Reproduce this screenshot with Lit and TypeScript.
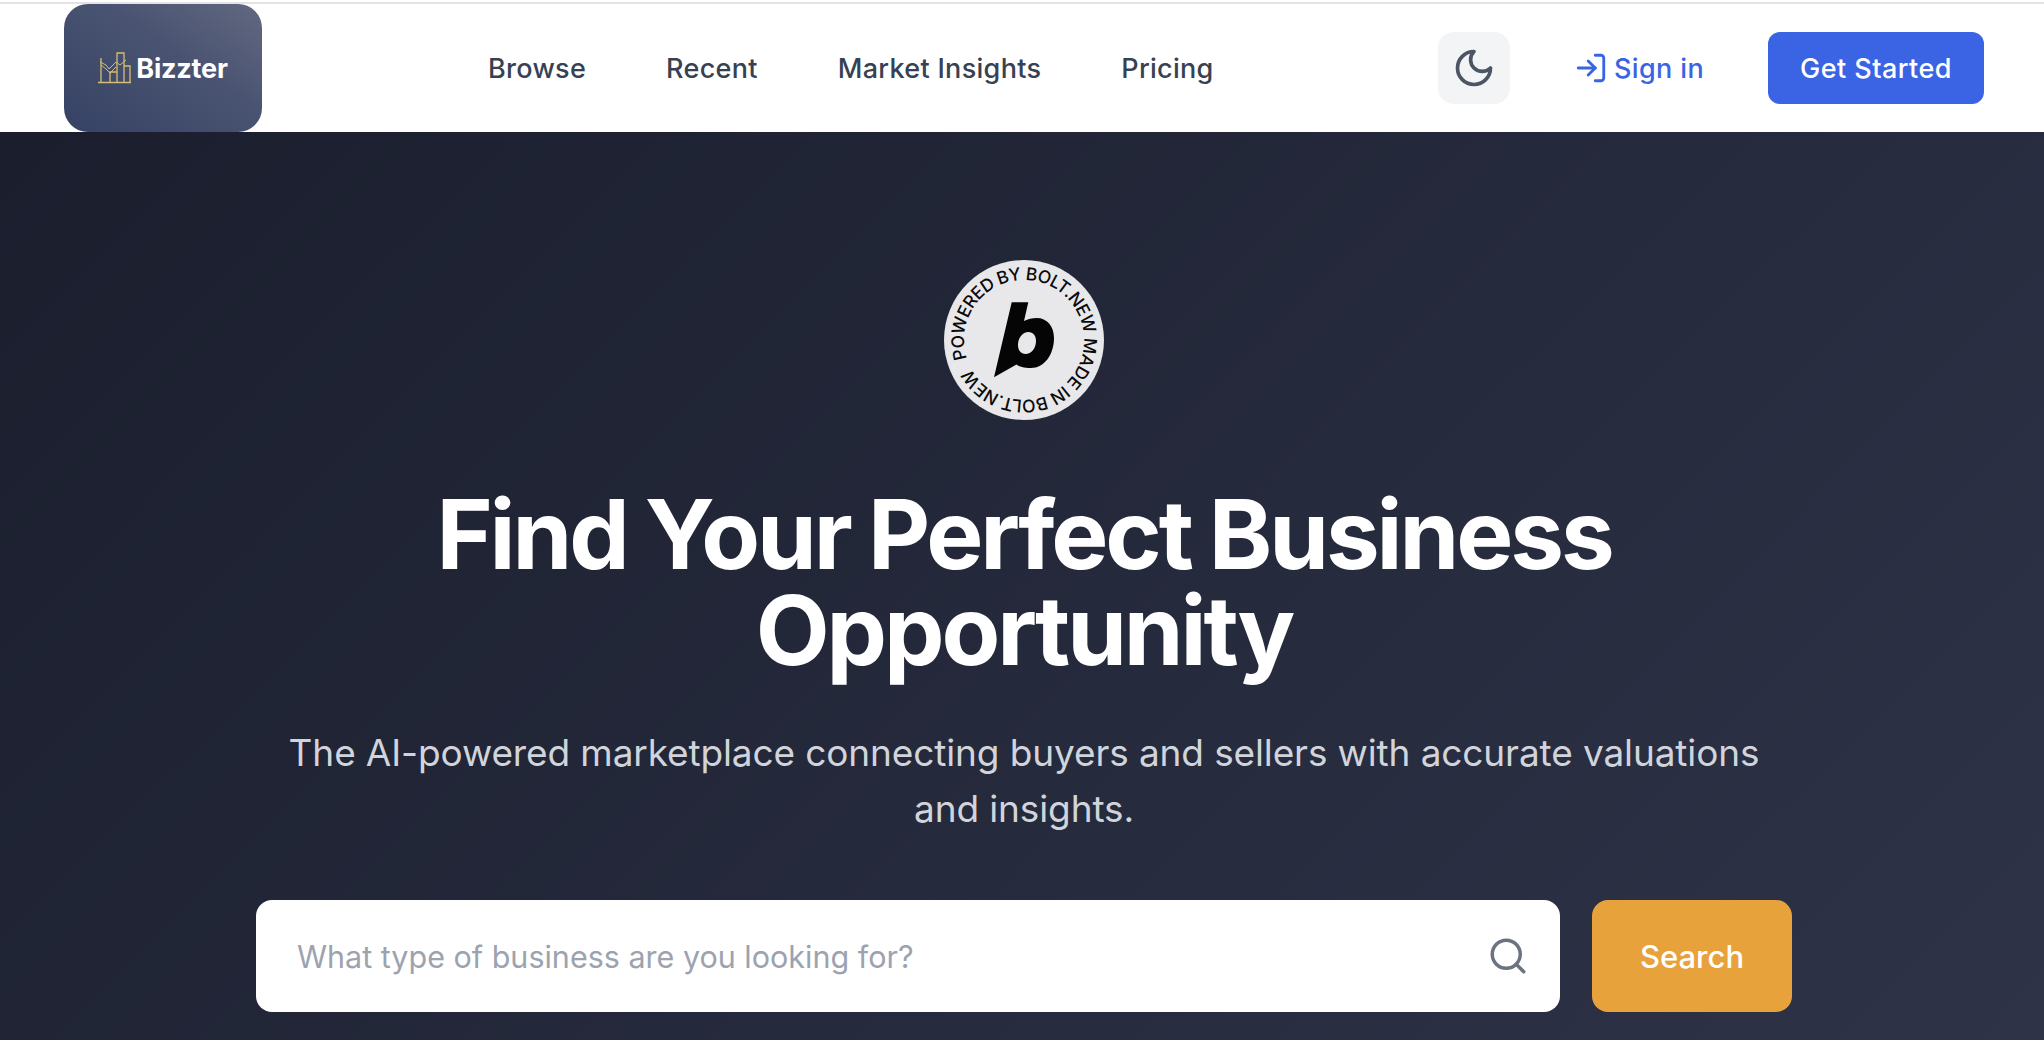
import { LitElement, html, css, svg } from "lit";
import { customElement } from "lit/decorators.js";

@customElement("app-root")
export class AppRoot extends LitElement {
  static styles = css`
    :host { display: block; height: 1040px; overflow: hidden; background: #fff; font-family: Inter, "Liberation Sans", sans-serif; }
    * { box-sizing: border-box; }
    .topline { height: 4px; border-top: 2px solid #fff; background: #e3e3e3; }
    header { height: 128px; display: flex; align-items: stretch; padding: 0 60px 0 64px; background: #fff; }
    .logo { width: 198px; display: flex; align-items: center; justify-content: center; gap: 4px; border-radius: 24px; background: linear-gradient(35deg, #364264 0%, #4a5472 60%, #626880 100%); }
    .logo svg { width: 34px; height: 34px; display: block; }
    .logo span { font-size: 27px; font-weight: 700; color: #fff; letter-spacing: -0.2px; }
    nav { display: flex; align-items: center; gap: 80px; margin-left: 226px; }
    nav a { font-size: 27px; font-weight: 500; color: #374151; letter-spacing: 0.3px; }
    .right { display: flex; align-items: center; gap: 64px; margin-left: auto; }
    .moon { width: 72px; height: 72px; border-radius: 16px; background: #f3f4f6; display: flex; align-items: center; justify-content: center; }
    .moon svg { width: 44px; height: 44px; color: #4b5563; }
    .signin { display: flex; align-items: center; gap: 6px; font-size: 27px; font-weight: 500; color: #3b64e4; letter-spacing: 0.35px; }
    .signin svg { width: 34px; height: 34px; }
    .start { width: 216px; height: 72px; border-radius: 12px; background: #3b64e4; color: #fff; font-size: 27px; font-weight: 500; letter-spacing: 0.45px; display: flex; align-items: center; justify-content: center; }
    .hero { height: 908px; background: linear-gradient(135deg, #1a1e2d 0%, #2e3348 100%); display: flex; flex-direction: column; align-items: center; padding: 128px 0 0 4px; }
    .badge { width: 160px; height: 160px; display: block; }
    .badge text { font-family: Inter, "Liberation Sans", sans-serif; font-size: 17.5px; font-weight: 500; fill: #0a0a0a; }
    h1 { margin: 66px 0 0; max-width: 1536px; text-align: center; font-size: 96px; line-height: 96px; font-weight: 700; letter-spacing: -3.1px; word-spacing: -1.5px; color: #fff; }
    p { margin: 47px 0 0; max-width: 1500px; text-align: center; font-size: 37px; line-height: 56px; letter-spacing: -0.12px; color: #d1d5db; font-weight: 400; }
    .search { margin-top: 63px; width: 1536px; display: flex; gap: 32px; }
    .field { flex: 1; height: 112px; border-radius: 16px; background: #fff; display: flex; align-items: center; padding: 0 31px 0 39px; }
    input { flex: 1; min-width: 0; border: 0; outline: 0; background: transparent; font: 400 30.5px Inter, "Liberation Sans", sans-serif; color: #111827; }
    input::placeholder { color: #9ca3af; opacity: 1; }
    .field svg { width: 42px; height: 42px; color: #6b7280; }
    .go { width: 200px; height: 112px; border-radius: 16px; background: #e8a23c; color: #fff; font-size: 31px; font-weight: 500; display: flex; align-items: center; justify-content: center; }
  `;

  render() {
    const ring = "POWERED BY BOLT.NEW MADE IN BOLT.NEW";
    return html`
      <div class="topline"></div>
      <header>
        <div class="logo">
          <svg viewBox="0 0 34 34" fill="none" stroke="#d6bd74" stroke-width="1.3">
            <path d="M0 31.500H33M3 7V31M12 31V21H19V31M19 31V2H26V31M26 31V15H32V31"/>
            <path d="M2 11L8 14L11 18L18 11L22 14L28 9" stroke-width="1"/>
            <path d="M3 14L8 18L12 22L18 16" stroke-width="1"/>
          </svg>
          <span>Bizzter</span>
        </div>
        <nav><a>Browse</a><a>Recent</a><a>Market Insights</a><a>Pricing</a></nav>
        <div class="right">
          <div class="moon">
            <svg viewBox="0 0 24 24" fill="none" stroke="currentColor" stroke-width="2" stroke-linecap="round" stroke-linejoin="round"><path d="M12 3a6 6 0 0 0 9 9 9 9 0 1 1-9-9Z"/></svg>
          </div>
          <div class="signin">
            <svg viewBox="0 0 24 24" fill="none" stroke="currentColor" stroke-width="2" stroke-linecap="round" stroke-linejoin="round"><path d="M15 3h4a2 2 0 0 1 2 2v14a2 2 0 0 1-2 2h-4"/><path d="m10 17 5-5-5-5"/><path d="M15 12H3"/></svg>
            Sign in
          </div>
          <div class="start">Get Started</div>
        </div>
      </header>
      <section class="hero">
        <svg class="badge" viewBox="0 0 160 160">
          <circle cx="80" cy="80" r="80" fill="#e8e8ea"/>
          <defs><path id="ring" d="M20 80a60 60 0 1 1 120 0a60 60 0 1 1 -120 0"/></defs>
          ${svg`<text transform="rotate(-18 80 80)" textLength="366" lengthAdjust="spacing"><textPath href="#ring">${ring}</textPath></text>`}
          <path fill="#050505" fill-rule="evenodd" d="M67.700 42.300H84.300L80 61C84 59 88 58 92.700 58C103 58 110 66 110 78C110 95 100 108 87 108C80 108 75 106.500 72.500 104.500L50 117.300Z M84.500 72C78.500 72 74 78 74 85C74 90.500 77 94 81.500 94C87.500 94 92 88 92 81C92 75.500 89 72 84.500 72Z"/>
        </svg>
        <h1>Find Your Perfect Business Opportunity</h1>
        <p>The AI-powered marketplace connecting buyers and sellers with accurate valuations and insights.</p>
        <div class="search">
          <div class="field">
            <input placeholder="What type of business are you looking for?" />
            <svg viewBox="0 0 24 24" fill="none" stroke="currentColor" stroke-width="2" stroke-linecap="round" stroke-linejoin="round"><circle cx="11" cy="11" r="8"/><path d="m21 21-4.300-4.300"/></svg>
          </div>
          <div class="go">Search</div>
        </div>
      </section>
    `;
  }
}
